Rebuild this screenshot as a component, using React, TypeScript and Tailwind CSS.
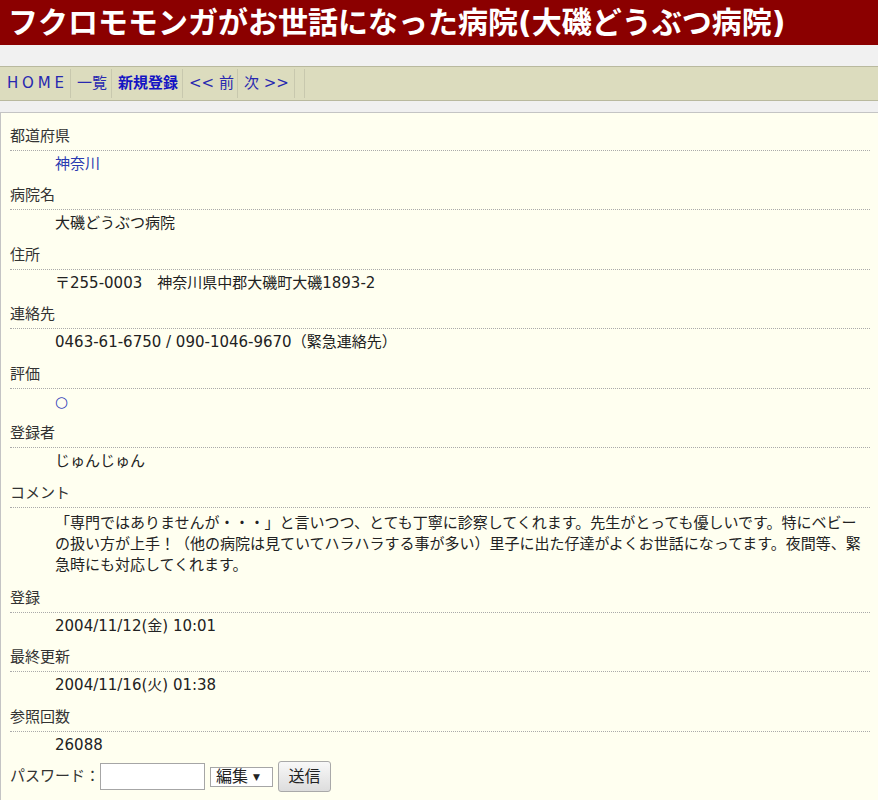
import React from "react";

type Item = { label: string; value: React.ReactNode; comment?: boolean };

const items: Item[] = [
  { label: "都道府県", value: <span className="text-[#2a3bb0]">神奈川</span> },
  { label: "病院名", value: "大磯どうぶつ病院" },
  { label: "住所", value: "〒255-0003　神奈川県中郡大磯町大磯1893-2" },
  { label: "連絡先", value: "0463-61-6750 / 090-1046-9670（緊急連絡先）" },
  { label: "評価", value: <span className="text-[#3040b8]">○</span> },
  { label: "登録者", value: "じゅんじゅん" },
  {
    label: "コメント",
    comment: true,
    value: (
      <>
        「専門ではありませんが・・・」と言いつつ、とても丁寧に診察してくれます。先生がとっても優しいです。特にベビー
        <br />
        の扱い方が上手！（他の病院は見ていてハラハラする事が多い）里子に出た仔達がよくお世話になってます。夜間等、緊
        <br />
        急時にも対応してくれます。
      </>
    ),
  },
  { label: "登録", value: "2004/11/12(金) 10:01" },
  { label: "最終更新", value: "2004/11/16(火) 01:38" },
  { label: "参照回数", value: "26088" },
];

export default function App() {
  return (
    <div className="min-h-[800px] flex flex-col bg-[#f1f1f1] font-['DejaVu_Sans','Noto_Sans_CJK_JP',sans-serif]">
      <div className="h-[45px] bg-[#8b0000] flex items-center pl-[8px] overflow-hidden whitespace-nowrap">
        <h1 className="text-white font-bold text-[30px] leading-[45px]">
          フクロモモンガがお世話になった病院(大磯どうぶつ病院)
        </h1>
      </div>
      <div className="h-[21px] bg-[#f1f1f1]" />
      <nav className="h-[35px] bg-[#dcdcbe] border-y border-[#b9b99e] flex py-[2px] text-[15px] leading-[29px] text-[#2828b0] whitespace-nowrap">
        <a className="w-[71px] pl-[7px] border-r border-[#c8c8ae] tracking-[3.8px]">HOME</a>
        <a className="w-[41px] pl-[6px] border-r border-[#c8c8ae]">一覧</a>
        <a className="w-[71px] pl-[6px] border-r border-[#c8c8ae] font-bold text-[#1414c4]">新規登録</a>
        <a className="w-[55px] pl-[6px] border-r border-[#c8c8ae]">&lt;&lt; 前</a>
        <a className="w-[57px] pl-[6px] border-r border-[#c8c8ae]">次 &gt;&gt;</a>
        <span className="w-[10px] border-r border-[#c8c8ae]" />
      </nav>
      <div className="h-[11px] bg-[#f0f0f0]" />
      <main className="flex-1 bg-[#fffff0] border-t border-l border-[#c4c4c4] pl-[9px] pr-[8px] pt-[12.5px] text-[15px] text-[#333]">
        <dl>
          {items.map((it, i) => (
            <div key={it.label}>
              <dt className="leading-[21px] pb-[3px] border-b border-dotted border-[#aaaaaa]">{it.label}</dt>
              <dd
                className={
                  "pl-[45px] leading-[21px] text-[#222] " +
                  (it.comment ? "pt-[5px] mb-[12px]" : i === items.length - 1 ? "pt-[3px]" : "pt-[3px] mb-[10.5px]")
                }
              >
                {it.value}
              </dd>
            </div>
          ))}
        </dl>
        <div className="flex items-center mt-[5.5px] h-[31px]">
          <span className="w-[90px] leading-[21px]">パスワード：</span>
          <input
            type="password"
            className="w-[105px] h-[27px] bg-white border border-[#a6a6a6] outline-none"
          />
          <div className="ml-[5px] w-[63px] h-[20px] bg-white border border-[#a6a6a6] flex items-center pl-[5px] text-[16px] leading-[18px] text-[#222]">
            <span>編集</span>
            <span className="ml-[5px] text-[9px]">▼</span>
          </div>
          <button className="ml-[5px] w-[53px] h-[31px] rounded-[3px] border border-[#a9a9a9] bg-gradient-to-b from-[#f8f8f8] to-[#dddddd] text-[16px] text-[#222] leading-[20px]">
            送信
          </button>
        </div>
        <div className="h-[9px]" />
      </main>
    </div>
  );
}
